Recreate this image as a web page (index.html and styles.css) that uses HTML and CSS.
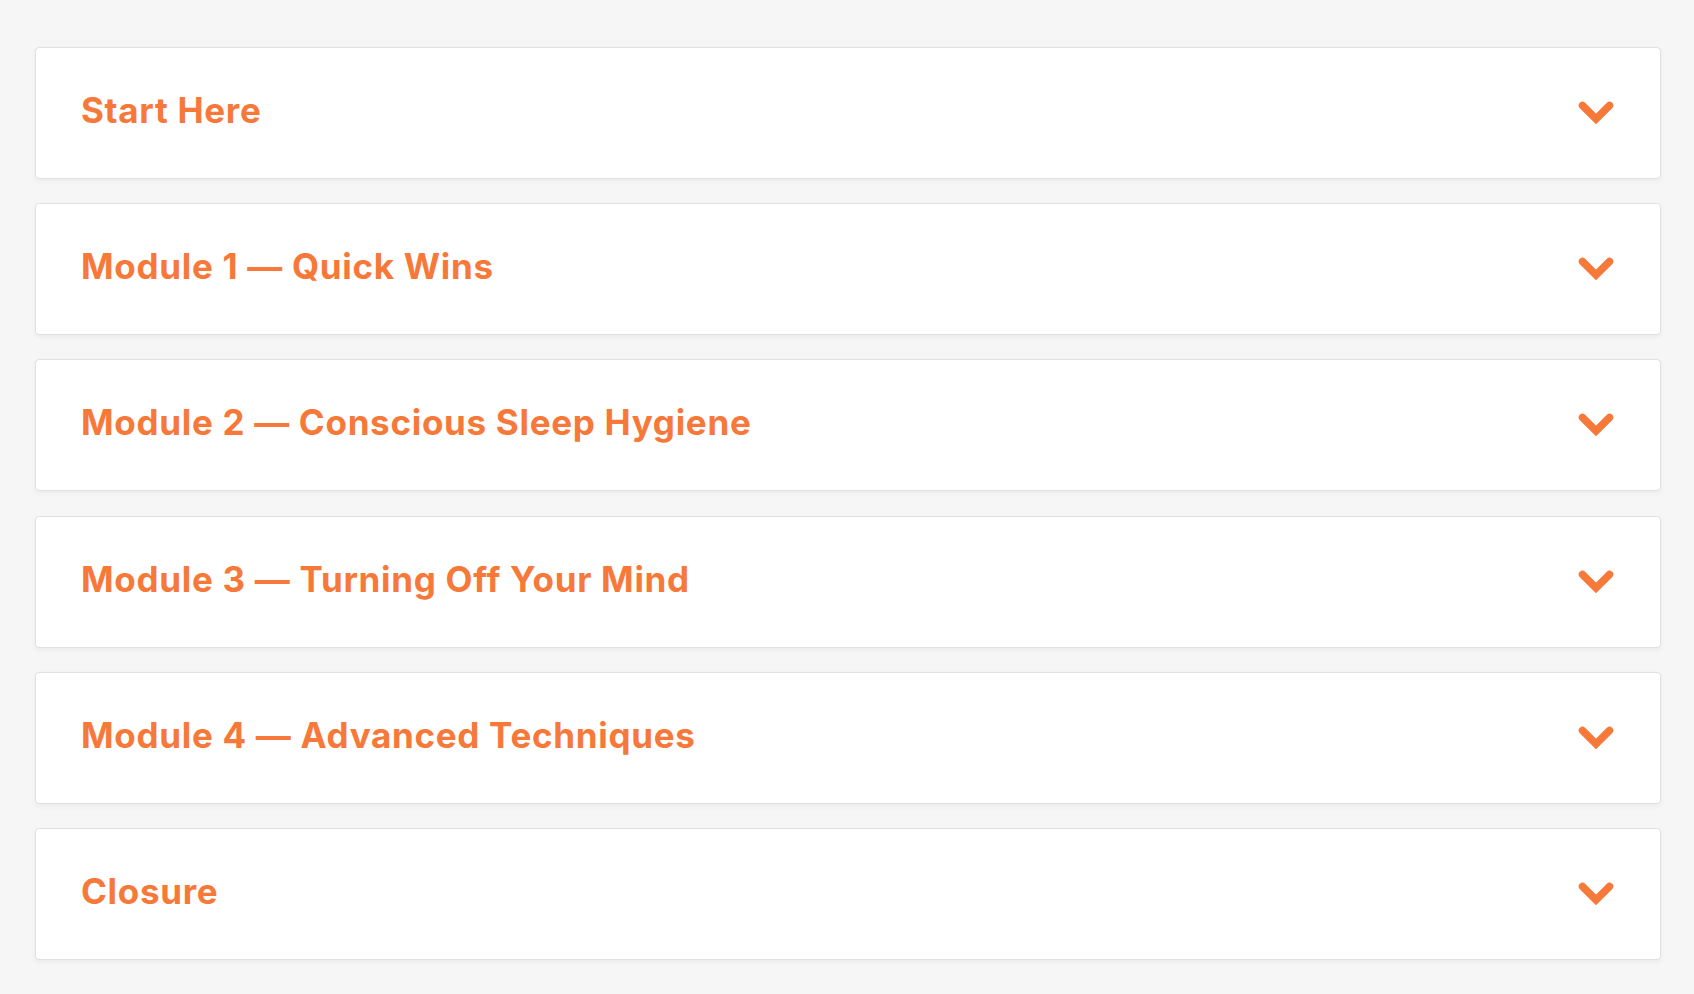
FILE: index.html
```html
<!DOCTYPE html>
<html lang="en">
<head>
    <meta charset="UTF-8">
    <meta name="viewport" content="width=device-width, initial-scale=1.0">
    <title>Course Modules</title>
    <link rel="stylesheet" href="styles.css">
</head>
<body>

<!-- Module list -->
<div class="module-list">
    <div class="module-item">
        <h3>Start Here</h3>
        <svg class="chevron" viewBox="0 0 36 24" width="36" height="24"><path d="M4.5 4.5 L18 18 L31.5 4.5"/></svg>
    </div>
    <div class="module-item">
        <h3>Module 1 — Quick Wins</h3>
        <svg class="chevron" viewBox="0 0 36 24" width="36" height="24"><path d="M4.5 4.5 L18 18 L31.5 4.5"/></svg>
    </div>
    <div class="module-item">
        <h3>Module 2 — Conscious Sleep Hygiene</h3>
        <svg class="chevron" viewBox="0 0 36 24" width="36" height="24"><path d="M4.5 4.5 L18 18 L31.5 4.5"/></svg>
    </div>
    <div class="module-item">
        <h3>Module 3 — Turning Off Your Mind</h3>
        <svg class="chevron" viewBox="0 0 36 24" width="36" height="24"><path d="M4.5 4.5 L18 18 L31.5 4.5"/></svg>
    </div>
    <div class="module-item">
        <h3>Module 4 — Advanced Techniques</h3>
        <svg class="chevron" viewBox="0 0 36 24" width="36" height="24"><path d="M4.5 4.5 L18 18 L31.5 4.5"/></svg>
    </div>
    <div class="module-item">
        <h3>Closure</h3>
        <svg class="chevron" viewBox="0 0 36 24" width="36" height="24"><path d="M4.5 4.5 L18 18 L31.5 4.5"/></svg>
    </div>
</div>

</body>
</html>
```
FILE: styles.css
```css
* {
    box-sizing: border-box;
}

body {
    font-family: Inter, "Liberation Sans", sans-serif;
    margin: 0;
    background-color: #f6f6f6;
}

/* List of modules */
.module-list {
    display: flex;
    flex-direction: column;
    gap: 24.4px;
    padding: 46.5px 33px 30px 35px;
}

.module-item {
    height: 132px;
    display: flex;
    align-items: center;
    justify-content: space-between;
    padding: 0 46px 0 45px;
    background-color: white;
    border: 1px solid #e1e1e1;
    border-radius: 4px;
    box-shadow: 0 2px 5px rgba(0, 0, 0, 0.05);
}

.module-item h3 {
    margin: 0 0 6px 0;
    font-size: 35px;
    font-weight: 700;
    letter-spacing: 0.7px;
    color: #f7793a;
}

.chevron path {
    fill: none;
    stroke: #f7793a;
    stroke-width: 7.5;
    stroke-linecap: round;
    stroke-linejoin: miter;
}
```
